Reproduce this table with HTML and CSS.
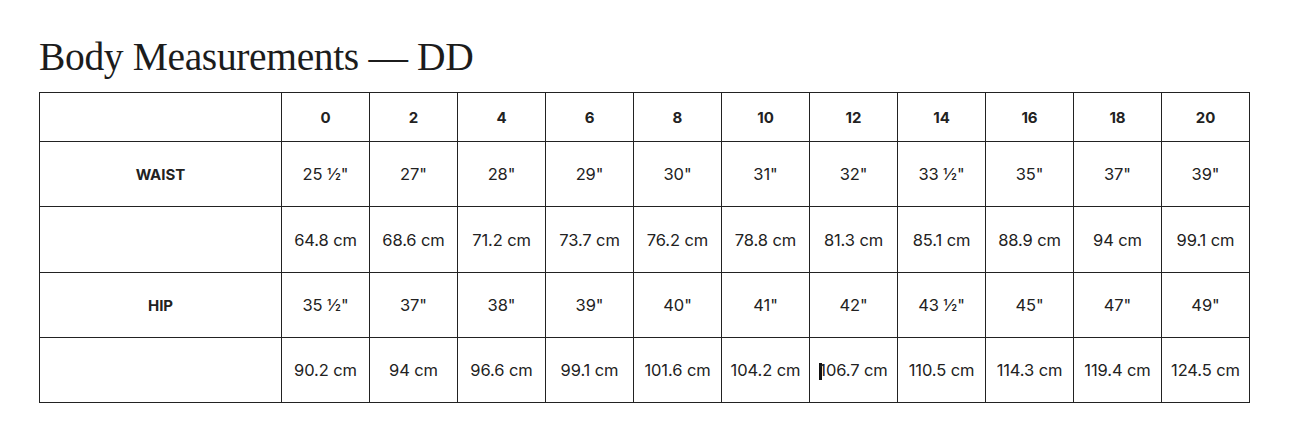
FILE: index.html
```html
<!DOCTYPE html>
<html lang="en">
<head>
<meta charset="utf-8">
<title>Body Measurements — DD</title>
<link rel="stylesheet" href="styles.css">
</head>
<body>
<main class="page">
  <h1 class="title">Body Measurements — DD</h1>
  <table class="sizes">
    <colgroup>
      <col class="col-label">
      <col span="11" class="col-size">
    </colgroup>
    <thead>
      <tr class="row-head">
        <th></th>
        <th>0</th><th>2</th><th>4</th><th>6</th><th>8</th><th>10</th><th>12</th><th>14</th><th>16</th><th>18</th><th>20</th>
      </tr>
    </thead>
    <tbody>
      <tr class="row-a">
        <th>WAIST</th>
        <td>25 ½"</td><td>27"</td><td>28"</td><td>29"</td><td>30"</td><td>31"</td><td>32"</td><td>33 ½"</td><td>35"</td><td>37"</td><td>39"</td>
      </tr>
      <tr class="row-b">
        <th></th>
        <td>64.8 cm</td><td>68.6 cm</td><td>71.2 cm</td><td>73.7 cm</td><td>76.2 cm</td><td>78.8 cm</td><td>81.3 cm</td><td>85.1 cm</td><td>88.9 cm</td><td>94 cm</td><td>99.1 cm</td>
      </tr>
      <tr class="row-a">
        <th>HIP</th>
        <td>35 ½"</td><td>37"</td><td>38"</td><td>39"</td><td>40"</td><td>41"</td><td>42"</td><td>43 ½"</td><td>45"</td><td>47"</td><td>49"</td>
      </tr>
      <tr class="row-a">
        <th></th>
        <td>90.2 cm</td><td>94 cm</td><td>96.6 cm</td><td>99.1 cm</td><td>101.6 cm</td><td>104.2 cm</td><td><span class="caret"></span>106.7 cm</td><td>110.5 cm</td><td>114.3 cm</td><td>119.4 cm</td><td>124.5 cm</td>
      </tr>
    </tbody>
  </table>
</main>
</body>
</html>
```

FILE: styles.css
```css
html, body {
  margin: 0;
  padding: 0;
  background: #ffffff;
}

.page {
  padding: 33px 0 0 39px;
}

.title {
  margin: 0 0 11px 0;
  font-family: "Liberation Serif", "DejaVu Serif", serif;
  font-weight: 400;
  font-size: 39.5px;
  line-height: 48px;
  color: #1c1c1c;
  letter-spacing: -0.35px;
}

.sizes {
  border-collapse: collapse;
  table-layout: fixed;
  width: 1211px;
  font-family: Inter, "Liberation Sans", sans-serif;
  font-size: 16.5px;
  color: #222222;
}

.col-label { width: 242px; }
.col-size { width: 88px; }

.sizes th,
.sizes td {
  border: 1px solid #222222;
  text-align: center;
  padding: 0;
  white-space: nowrap;
}

.sizes th {
  font-weight: 700;
  font-size: 15px;
}

.sizes td {
  font-weight: 400;
  letter-spacing: -0.1px;
}

.row-head { height: 49px; }
.row-a { height: 65px; }
.row-b { height: 66px; }

.caret {
  display: inline-block;
  width: 3px;
  height: 17px;
  background: #111111;
  vertical-align: -4px;
  margin-right: -3px;
}
```
